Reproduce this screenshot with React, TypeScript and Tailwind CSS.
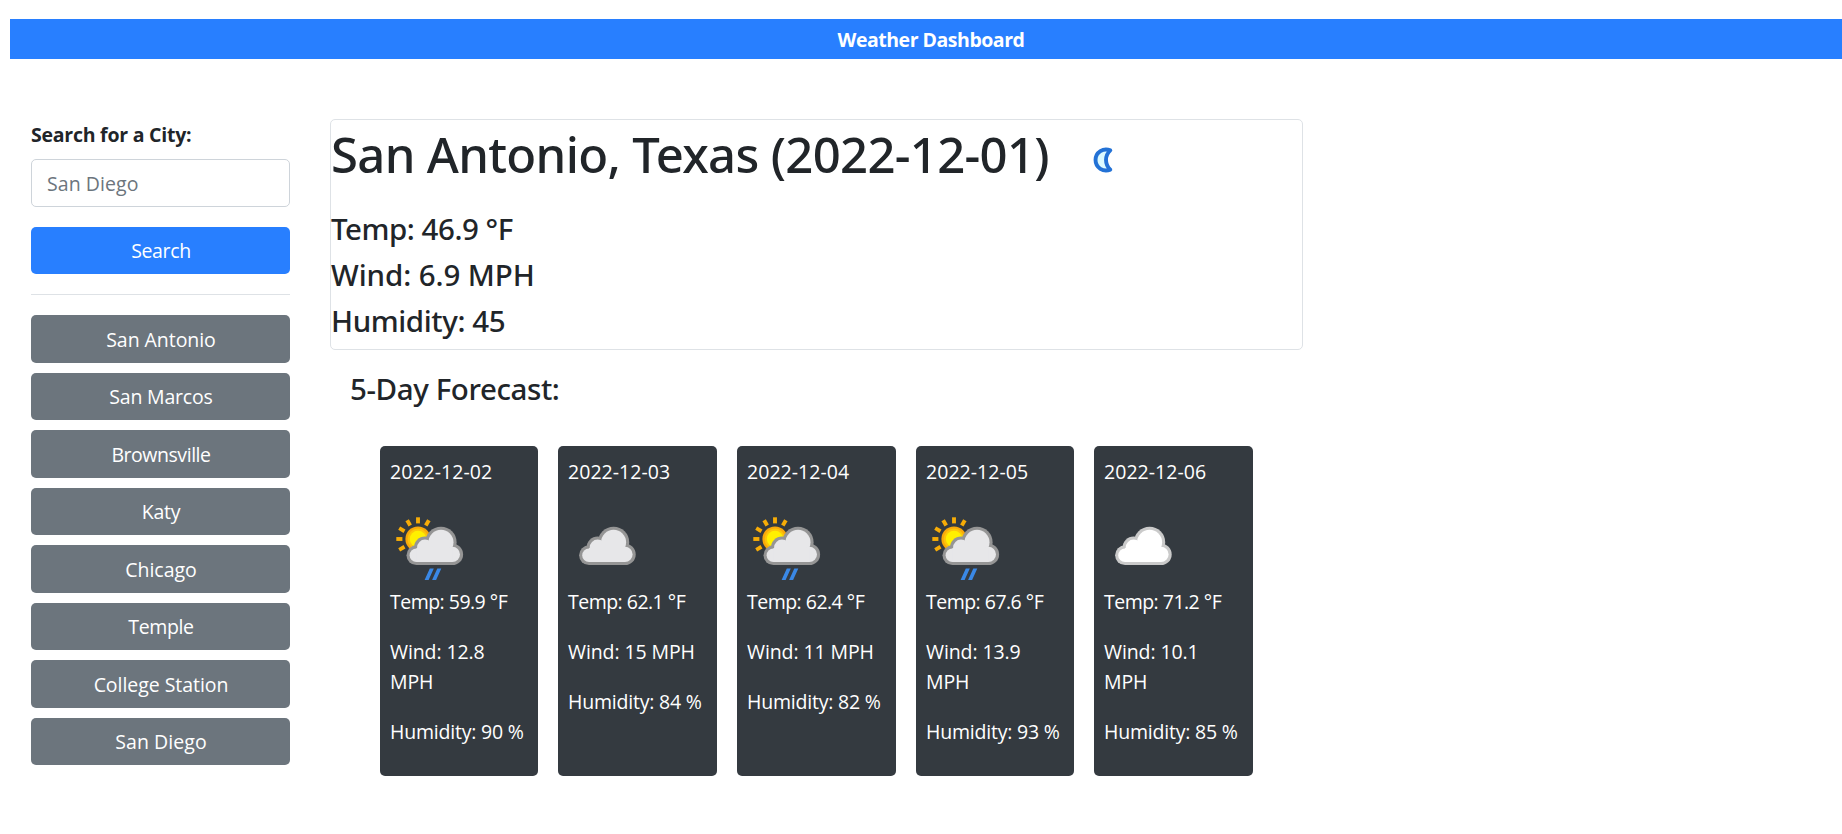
type WeatherKind = 'rain' | 'cloud' | 'fewClouds';

interface City {
  name: string;
  tracking: string;
}

interface Day {
  date: string;
  kind: WeatherKind;
  temp: string;
  wind: string;
  humidity: string;
  width: string;
}

const cities: City[] = [
  { name: 'San Antonio', tracking: 'tracking-[-0.05px]' },
  { name: 'San Marcos', tracking: 'tracking-[-0.2px]' },
  { name: 'Brownsville', tracking: 'tracking-[-0.45px]' },
  { name: 'Katy', tracking: 'tracking-[-0.2px]' },
  { name: 'Chicago', tracking: 'tracking-[-0.05px]' },
  { name: 'Temple', tracking: 'tracking-[-0.35px]' },
  { name: 'College Station', tracking: 'tracking-[-0.05px]' },
  { name: 'San Diego', tracking: 'tracking-[0.05px]' },
];

const days: Day[] = [
  { date: '2022-12-02', kind: 'rain', temp: '59.9', wind: '12.8', humidity: '90', width: 'w-[158px]' },
  { date: '2022-12-03', kind: 'cloud', temp: '62.1', wind: '15', humidity: '84', width: 'w-[159px]' },
  { date: '2022-12-04', kind: 'rain', temp: '62.4', wind: '11', humidity: '82', width: 'w-[159px]' },
  { date: '2022-12-05', kind: 'rain', temp: '67.6', wind: '13.9', humidity: '93', width: 'w-[158px]' },
  { date: '2022-12-06', kind: 'fewClouds', temp: '71.2', wind: '10.1', humidity: '85', width: 'w-[159px]' },
];

function Cloud({ outline, fill, dx }: { outline: string; fill: string; dx: number }) {
  const layer = (inset: number, color: string) => (
    <g fill={color}>
      <circle cx="51" cy="36.3" r={15.6 - inset} />
      <circle cx="62.4" cy="48.4" r={10.7 - inset} />
      <circle cx="26.4" cy="49.2" r={9.9 - inset} />
      <circle cx="35" cy="41.5" r={11 - inset} />
      <path d={`M26.4 ${59.1 - inset}H62.4V42H26.4Z`} />
    </g>
  );
  return (
    <g transform={`translate(${dx} 0)`}>
      {layer(0, outline)}
      {layer(3.1, fill)}
    </g>
  );
}

function Sun() {
  return (
    <g>
      <g stroke="#f7ac07" strokeWidth="3.9">
        {[0, 30, -30, -60, -90, -120].map((a) => (
          <path key={a} d="M28 17.4V11.3" transform={`rotate(${a} 28 33)`} />
        ))}
      </g>
      <circle cx="28" cy="33" r="12.6" fill="#f9a90a" />
      <circle cx="28" cy="33" r="10.4" fill="#fcc60a" />
      <circle cx="28" cy="33" r="8.2" fill="#fff000" />
    </g>
  );
}

function WeatherIcon({ kind }: { kind: WeatherKind }) {
  return (
    <svg width="80" height="80" viewBox="0 0 80 80" className="block">
      {kind === 'rain' && (
        <>
          <Sun />
          <Cloud outline="#959595" fill="#e7e7e9" dx={0} />
          <path d="M39.8 62.4H43.8L38.6 74H34.6ZM47.3 62.4H51.3L46.1 74H42.1Z" fill="#3a88e6" />
        </>
      )}
      {kind === 'cloud' && <Cloud outline="#959595" fill="#e7e7e9" dx={-5.4} />}
      {kind === 'fewClouds' && <Cloud outline="#cacaca" fill="#ffffff" dx={-5.4} />}
    </svg>
  );
}

function Moon() {
  return (
    <svg width="50" height="50" viewBox="0 0 50 50" className="mt-[15px] block shrink-0">
      <path
        d="M30.3 15.4A10.5 10.5 0 1 0 30.3 34.6A12.9 12.9 0 0 1 30.3 15.4Z"
        fill="#dcfaff"
        stroke="#2372d6"
        strokeWidth="3.9"
        strokeLinejoin="round"
      />
    </svg>
  );
}

function Sidebar() {
  return (
    <aside className="w-[259px] shrink-0">
      <label
        htmlFor="city"
        className="block h-[30px] pt-px text-[19.5px] leading-[30px] font-bold tracking-[-0.24px] whitespace-nowrap"
      >
        Search for a City:
      </label>
      <input
        id="city"
        type="text"
        placeholder="San Diego"
        className="mt-[10px] block h-[48px] w-full rounded-[5px] border border-[#ced4da] px-[15px] pt-px tracking-[0.06px] placeholder:text-[#6c757d]"
      />
      <button className="mt-5 block h-[47px] w-full rounded-[5px] bg-[#287fff] pt-px pl-px tracking-[-0.35px] text-white">
        Search
      </button>
      <hr className="my-5 border-t border-[#dee2e6]" />
      <div className="flex flex-col gap-[10px]">
        {cities.map((c) => (
          <button
            key={c.name}
            className={`h-[47.5px] w-full rounded-[5px] bg-[#6c757d] pt-[2px] pl-px text-white ${c.tracking}`}
          >
            {c.name}
          </button>
        ))}
      </div>
    </aside>
  );
}

function DayCard({ day }: { day: Day }) {
  return (
    <article
      className={`h-[330px] shrink-0 rounded-[5px] bg-[#343a40] pt-[11px] pr-2 pl-[10px] leading-[30px] text-white ${day.width}`}
    >
      <p className="mb-[19px] tracking-[0.05px]">{day.date}</p>
      <WeatherIcon kind={day.kind} />
      <p className="mt-px mb-5 tracking-[-0.52px]">Temp: {day.temp} °F</p>
      <p className="mb-5 tracking-[-0.1px]">Wind: {day.wind} MPH</p>
      <p className="tracking-[-0.2px] whitespace-nowrap">Humidity: {day.humidity} %</p>
    </article>
  );
}

export default function App() {
  return (
    <div className="min-h-screen bg-white pt-[19px] font-['Open_Sans','Noto_Sans',sans-serif] text-[19.5px] leading-[30px] text-[#212529]">
      <header className="ml-[10px] flex h-10 items-center justify-center bg-[#287fff] pt-[2px] pl-[10px] font-bold tracking-[-0.48px] text-white">
        Weather Dashboard
      </header>
      <div className="mt-[60px] flex gap-10 pl-[31px]">
        <Sidebar />
        <main className="w-[973px] shrink-0">
          <section className="h-[231px] rounded-[5px] border border-[#dee2e6] font-['Noto_Sans',sans-serif] font-medium">
            <div className="flex h-[91px]">
              <h1 className="w-[749px] shrink-0 pt-1 text-[49px] leading-[60px] tracking-[-0.67px] whitespace-nowrap">
                San Antonio, Texas (2022-12-01)
              </h1>
              <Moon />
            </div>
            <div className="flex flex-col gap-[10px] text-[29.5px] leading-9">
              <p className="tracking-[-0.46px]">Temp: 46.9 °F</p>
              <p className="tracking-[-0.08px]">Wind: 6.9 MPH</p>
              <p className="tracking-[-0.4px]">Humidity: 45</p>
            </div>
          </section>
          <h2 className="mt-[21px] ml-5 font-['Noto_Sans',sans-serif] text-[29.5px] leading-9 font-medium tracking-[-0.4px]">
            5-Day Forecast:
          </h2>
          <div className="mt-[39px] ml-[50px] flex gap-5">
            {days.map((d) => (
              <DayCard key={d.date} day={d} />
            ))}
          </div>
        </main>
      </div>
    </div>
  );
}
